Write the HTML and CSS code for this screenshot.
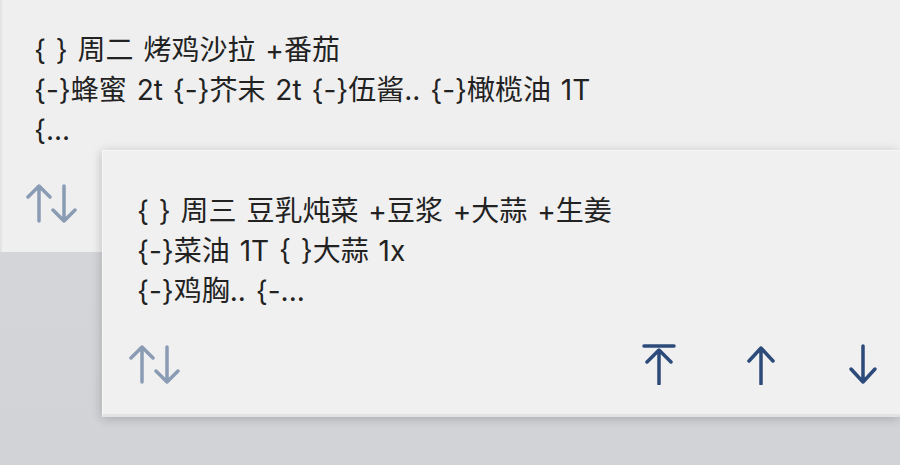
FILE: index.html
```html
<!DOCTYPE html>
<html>
<head>
    <meta charset="UTF-8">
    <title>菜单</title>
    <link rel="stylesheet" href="styles.css">
</head>
<body>
    <div class="board">
        <div class="card card-back">
            <div class="card-text">
                <div>{ } 周二 烤鸡沙拉 +番茄</div>
                <div>{-}蜂蜜 2t {-}芥末 2t {-}伍酱.. {-}橄榄油 1T</div>
                <div>{...</div>
            </div>
            <div class="card-tools">
                <svg class="icon icon-swap" width="52" height="40" viewBox="0 0 52 40">
                    <path d="M13 38V3M2 14L13 3l11 11"/>
                    <path d="M38 3v35M27 27l11 11 11-11"/>
                </svg>
            </div>
        </div>

        <div class="card card-front">
            <div class="card-text">
                <div>{ } 周三 豆乳炖菜 +豆浆 +大蒜 +生姜</div>
                <div>{-}菜油 1T { }大蒜 1x</div>
                <div>{-}鸡胸.. {-...</div>
            </div>
            <div class="card-tools">
                <svg class="icon icon-swap" width="52" height="40" viewBox="0 0 52 40">
                    <path d="M13 38V3M2 14L13 3l11 11"/>
                    <path d="M38 3v35M27 27l11 11 11-11"/>
                </svg>
                <div class="tool-group">
                    <!-- move to top -->
                    <svg class="icon icon-move" width="34" height="42" viewBox="0 0 34 42">
                        <path d="M2 3h30M17 7v34M5 19L17 7l12 12"/>
                    </svg>
                    <!-- move up -->
                    <svg class="icon icon-move" width="34" height="42" viewBox="0 0 34 42">
                        <path d="M17 5v36M5 18L17 5l12 13"/>
                    </svg>
                    <!-- move down -->
                    <svg class="icon icon-move" width="34" height="42" viewBox="0 0 34 42">
                        <path d="M17 3v36M5 26l12 13 12-13"/>
                    </svg>
                </div>
            </div>
        </div>
    </div>
</body>
</html>
```

FILE: styles.css
```css
body {
    margin: 0;
    background-color: #d5d6d9;
    font-family: Inter, "Noto Sans CJK SC", sans-serif;
    overflow: hidden;
}
.board {
    width: 900px;
    height: 465px;
    background: linear-gradient(#d7d8db, #d2d3d6);
}
.card {
    background-color: #efefef;
    color: #222;
}
.card-back {
    height: 252px;
    box-sizing: border-box;
    padding-top: 30px;
    border-left: 2px solid #e4e4e5;
}
.card-front {
    margin-top: -102px;
    margin-left: 102px;
    padding-top: 40px;
    padding-bottom: 30px;
    background-color: #f0f0f0;
    border-top: 1px solid #f7f7f7;
    border-left: 1px solid #f8f8f8;
    border-bottom: 3px solid #e2e2e3;
    box-shadow: -2px 0 10px rgba(0,0,0,0.08), 0 3px 10px rgba(0,0,0,0.12);
    position: relative;
}
.card-text {
    padding-left: 34px;
    font-size: 28px;
    line-height: 40px;
    word-spacing: 2px;
    white-space: nowrap;
}
.card-back .card-text {
    padding-left: 32px;
}
.card-tools {
    display: flex;
    align-items: center;
    margin-top: 33px;
    padding-left: 26px;
    height: 40px;
}
.card-back .card-tools {
    padding-left: 24px;
}
.icon {
    fill: none;
    stroke-width: 3.5;
    stroke-linecap: round;
    stroke-linejoin: round;
}
.icon-swap {
    stroke: #8a9bb4;
}
.tool-group {
    display: flex;
    gap: 68px;
    margin-left: auto;
    margin-right: 20px;
}
.icon-move {
    stroke: #2c4b7a;
}
```
